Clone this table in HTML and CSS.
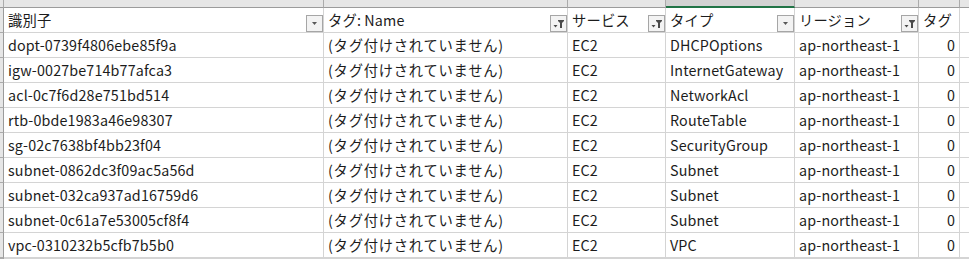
FILE: index.html
```html
<!DOCTYPE html>
<html lang="ja">
<head>
<meta charset="utf-8">
<title>Sheet</title>
<link rel="stylesheet" href="styles.css">
</head>
<body>
<div class="sheet">
  <div class="ch corner"></div>
  <div class="ch"></div>
  <div class="ch"></div>
  <div class="ch"></div>
  <div class="ch sel"></div>
  <div class="ch"></div>
  <div class="ch"></div>
  <div class="ch last"></div>

  <div class="rh"></div>
  <div class="c hd"><span class="t">識別子</span><span class="fb"><svg viewBox="0 0 15 15" width="15" height="15"><polygon points="5,6 10,6 7.5,9" fill="#595959"/></svg></span></div>
  <div class="c hd"><span class="t">タグ: Name</span><span class="fb"><svg viewBox="0 0 15 15" width="15" height="15"><polygon points="7,4 13,4 13,5 11,7 11,12 9,12 9,7 7,5" fill="#4a4a4a"/><polygon points="2.5,9 6.5,9 4.5,11.5" fill="#4a4a4a"/></svg></span></div>
  <div class="c hd"><span class="t">サービス</span><span class="fb"><svg viewBox="0 0 15 15" width="15" height="15"><polygon points="7,4 13,4 13,5 11,7 11,12 9,12 9,7 7,5" fill="#4a4a4a"/><polygon points="2.5,9 6.5,9 4.5,11.5" fill="#4a4a4a"/></svg></span></div>
  <div class="c hd"><span class="t">タイプ</span><span class="fb"><svg viewBox="0 0 15 15" width="15" height="15"><polygon points="5,6 10,6 7.5,9" fill="#595959"/></svg></span></div>
  <div class="c hd"><span class="t">リージョン</span><span class="fb"><svg viewBox="0 0 15 15" width="15" height="15"><polygon points="7,4 13,4 13,5 11,7 11,12 9,12 9,7 7,5" fill="#4a4a4a"/><polygon points="2.5,9 6.5,9 4.5,11.5" fill="#4a4a4a"/></svg></span></div>
  <div class="c hd"><span class="t">タグ</span></div>
  <div class="c e"></div>

  <div class="rh"></div><div class="c">dopt-0739f4806ebe85f9a</div><div class="c jp">(タグ付けされていません)</div><div class="c">EC2</div><div class="c">DHCPOptions</div><div class="c">ap-northeast-1</div><div class="c n">0</div><div class="c e"></div>
  <div class="rh"></div><div class="c">igw-0027be714b77afca3</div><div class="c jp">(タグ付けされていません)</div><div class="c">EC2</div><div class="c">InternetGateway</div><div class="c">ap-northeast-1</div><div class="c n">0</div><div class="c e"></div>
  <div class="rh"></div><div class="c">acl-0c7f6d28e751bd514</div><div class="c jp">(タグ付けされていません)</div><div class="c">EC2</div><div class="c">NetworkAcl</div><div class="c">ap-northeast-1</div><div class="c n">0</div><div class="c e"></div>
  <div class="rh"></div><div class="c">rtb-0bde1983a46e98307</div><div class="c jp">(タグ付けされていません)</div><div class="c">EC2</div><div class="c">RouteTable</div><div class="c">ap-northeast-1</div><div class="c n">0</div><div class="c e"></div>
  <div class="rh"></div><div class="c">sg-02c7638bf4bb23f04</div><div class="c jp">(タグ付けされていません)</div><div class="c">EC2</div><div class="c">SecurityGroup</div><div class="c">ap-northeast-1</div><div class="c n">0</div><div class="c e"></div>
  <div class="rh"></div><div class="c">subnet-0862dc3f09ac5a56d</div><div class="c jp">(タグ付けされていません)</div><div class="c">EC2</div><div class="c">Subnet</div><div class="c">ap-northeast-1</div><div class="c n">0</div><div class="c e"></div>
  <div class="rh"></div><div class="c">subnet-032ca937ad16759d6</div><div class="c jp">(タグ付けされていません)</div><div class="c">EC2</div><div class="c">Subnet</div><div class="c">ap-northeast-1</div><div class="c n">0</div><div class="c e"></div>
  <div class="rh"></div><div class="c">subnet-0c61a7e53005cf8f4</div><div class="c jp">(タグ付けされていません)</div><div class="c">EC2</div><div class="c">Subnet</div><div class="c">ap-northeast-1</div><div class="c n">0</div><div class="c e"></div>
  <div class="rh"></div><div class="c">vpc-0310232b5cfb7b5b0</div><div class="c jp">(タグ付けされていません)</div><div class="c">EC2</div><div class="c">VPC</div><div class="c">ap-northeast-1</div><div class="c n">0</div><div class="c e"></div>
  <div class="rh"></div><div class="c"></div><div class="c"></div><div class="c"></div><div class="c"></div><div class="c"></div><div class="c"></div><div class="c e"></div>
</div>
</body>
</html>
```

FILE: styles.css
```css
html, body {
  margin: 0;
  padding: 0;
  background: #ffffff;
  overflow: hidden;
}
.sheet {
  display: grid;
  grid-template-columns: 4px 320px 244px 98px 129px 124px 41px 1fr;
  grid-template-rows: 8px repeat(10, 25px);
  width: 969px;
  font-family: "Noto Sans CJK JP", "Noto Sans", sans-serif;
  font-size: 14.3px;
  letter-spacing: 0.15px;
  color: #1c1c1c;
}
.ch {
  box-sizing: border-box;
  background: #e6e6e6;
  border-right: 1px solid #ababab;
  border-bottom: 1px solid #9b9b9b;
}
.ch.sel {
  background: #d2d2d2;
  border-bottom: 2px solid #217346;
}
.ch.last {
  border-right: none;
}
.rh {
  box-sizing: border-box;
  background: #e6e6e6;
  border-right: 1px solid #9b9b9b;
  border-bottom: 1px solid #ababab;
}
.c {
  box-sizing: border-box;
  border-right: 1px solid #d4d4d4;
  border-bottom: 1px solid #d4d4d4;
  padding: 0 0 0 4px;
  display: flex;
  align-items: center;
  white-space: nowrap;
  overflow: hidden;
  line-height: 1;
}
.c.jp {
  letter-spacing: 0.75px;
}
.c.e {
  border-right: none;
}
.c.n {
  justify-content: flex-end;
  padding: 0 4px 0 0;
}
.hd .t {
  flex: 1 1 auto;
}
.fb {
  flex: none;
  align-self: flex-end;
  box-sizing: border-box;
  width: 17px;
  height: 17px;
  border: 1px solid #a6a6a6;
  background: #f3f3f3;
  display: flex;
}
.fb svg {
  display: block;
}
```
